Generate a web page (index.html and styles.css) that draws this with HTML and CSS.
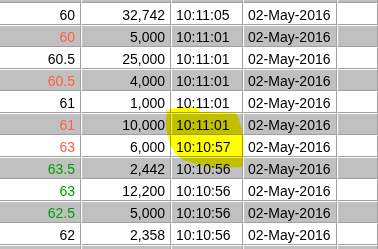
FILE: index.html
```html
<!DOCTYPE html>
<html>
<head>
<meta charset="utf-8">
<link rel="stylesheet" href="styles.css">
</head>
<body>
<div class="grid">
  <div class="row gray top"><div class="c c1"></div><div class="c c2"></div><div class="c c3"></div><div class="c c4"></div><div class="c c5"></div></div>
  <div class="row"><div class="c c1">60</div><div class="c c2">32,742</div><div class="c c3">10:11:05</div><div class="c c4">02-May-2016</div><div class="c c5"></div></div>
  <div class="row gray"><div class="c c1 up">60</div><div class="c c2">5,000</div><div class="c c3">10:11:01</div><div class="c c4">02-May-2016</div><div class="c c5"></div></div>
  <div class="row"><div class="c c1">60.5</div><div class="c c2">25,000</div><div class="c c3">10:11:01</div><div class="c c4">02-May-2016</div><div class="c c5"></div></div>
  <div class="row gray"><div class="c c1 up">60.5</div><div class="c c2">4,000</div><div class="c c3">10:11:01</div><div class="c c4">02-May-2016</div><div class="c c5"></div></div>
  <div class="row"><div class="c c1">61</div><div class="c c2">1,000</div><div class="c c3">10:11:01</div><div class="c c4">02-May-2016</div><div class="c c5"></div></div>
  <div class="row gray"><div class="c c1 up">61</div><div class="c c2">10,000</div><div class="c c3">10:11:01</div><div class="c c4">02-May-2016</div><div class="c c5"></div></div>
  <div class="row"><div class="c c1 up">63</div><div class="c c2">6,000</div><div class="c c3">10:10:57</div><div class="c c4">02-May-2016</div><div class="c c5"></div></div>
  <div class="row gray"><div class="c c1 dn">63.5</div><div class="c c2">2,442</div><div class="c c3">10:10:56</div><div class="c c4">02-May-2016</div><div class="c c5"></div></div>
  <div class="row"><div class="c c1 dn">63</div><div class="c c2">12,200</div><div class="c c3">10:10:56</div><div class="c c4">02-May-2016</div><div class="c c5"></div></div>
  <div class="row gray"><div class="c c1 dn">62.5</div><div class="c c2">5,000</div><div class="c c3">10:10:56</div><div class="c c4">02-May-2016</div><div class="c c5"></div></div>
  <div class="row"><div class="c c1">62</div><div class="c c2">2,358</div><div class="c c3">10:10:56</div><div class="c c4">02-May-2016</div><div class="c c5"></div></div>
  <div class="row gray"><div class="c c1"></div><div class="c c2"></div><div class="c c3"></div><div class="c c4"></div><div class="c c5"></div></div>
</div>
<svg class="marker" width="378" height="249" viewBox="0 0 378 249">
  <path d="M170,109 C178,107 190,106 197,108 L200,112 L236,113 C239,118 241,126 243,135 L243,157 L242,167 L213,168 C204,166 196,164 186,161 C179,158 174,153 171,146 C168,139 166,131 166,122 C166,115 167,111 170,109 Z" fill="#ffff00"/>
</svg>
</body>
</html>
```
FILE: styles.css
```css
html, body {
  margin: 0;
  padding: 0;
  background: #ffffff;
  overflow: hidden;
  width: 378px;
  height: 249px;
}
.grid {
  display: flex;
  flex-direction: column;
  height: 249px;
  overflow: hidden;
  font-family: "Liberation Sans", Arial, sans-serif;
  font-size: 14px;
  color: #000000;
}
.row {
  display: grid;
  grid-template-columns: 81px 90px 72px 94px 41px;
  height: 22px;
  flex: none;
  overflow: hidden;
}
.row.gray {
  background: #c0c0c0;
}
.row.top {
  height: 3px;
}
.row.top .c {
  border-top: none;
}
.c {
  box-sizing: border-box;
  border-top: 1px solid #ffffff;
  border-bottom: 1px solid #a0a0a0;
  border-right: 1px solid #a0a0a0;
  line-height: 20px;
  padding-top: 1px;
  white-space: nowrap;
  overflow: hidden;
}
.c + .c {
  border-left: 1px solid #ffffff;
}
.c1, .c2 {
  text-align: right;
  padding-right: 5px;
}
.c3, .c4 {
  padding-left: 4px;
}
.up {
  color: #ff6040;
}
.dn {
  color: #00a000;
}
.marker {
  position: absolute;
  left: 0;
  top: 0;
  mix-blend-mode: multiply;
  pointer-events: none;
}
```
